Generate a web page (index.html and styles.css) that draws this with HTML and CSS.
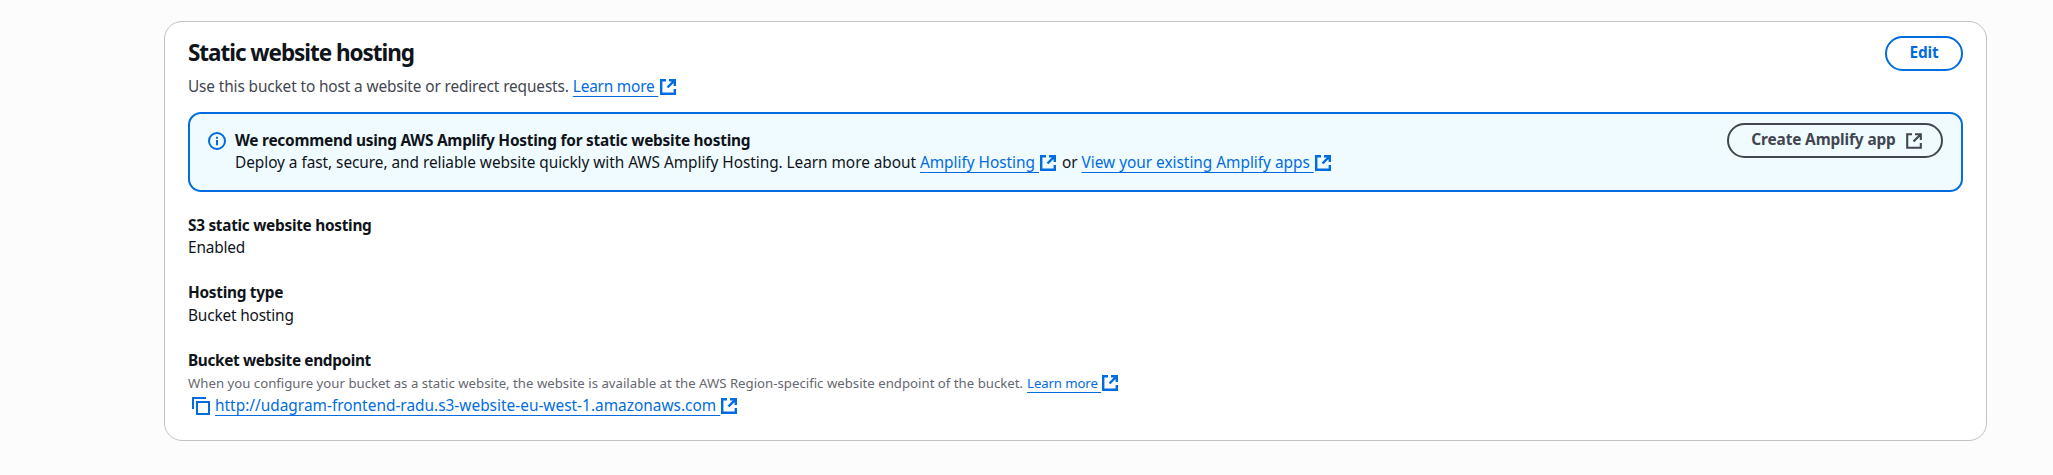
FILE: index.html
```html
<!DOCTYPE html>
<html lang="en">
<head>
<meta charset="utf-8">
<title>Static website hosting</title>
<link rel="stylesheet" href="styles.css">
</head>
<body>
<svg class="defs" aria-hidden="true">
  <symbol id="external" viewBox="0 0 16 16"><path d="M6 1.200H1.200v13.600h13.600V10M9 1.200h5.800V7M14.800 1.200L7.500 8.500"/></symbol>
</svg>
<main class="card">
  <header class="head">
    <div>
      <h2 class="title">Static website hosting</h2>
      <p class="line desc"><span>Use this bucket to host a website or redirect requests.</span><a class="link"><span class="u">Learn more </span><svg class="icon"><use href="#external"/></svg></a></p>
    </div>
    <button class="btn">Edit</button>
  </header>
  <section class="alert">
    <svg class="info" viewBox="0 0 18 18"><circle cx="9" cy="9" r="8"/><path d="M9 8v5.200M9 4.800v2"/></svg>
    <div class="alert-body">
      <h3 class="line strong alert-title">We recommend using AWS Amplify Hosting for static website hosting</h3>
      <p class="line alert-text"><span>Deploy a fast, secure, and reliable website quickly with AWS Amplify Hosting. Learn more about</span><a class="link"><span class="u">Amplify Hosting </span><svg class="icon"><use href="#external"/></svg></a><span class="or">or</span><a class="link"><span class="u">View your existing Amplify apps </span><svg class="icon"><use href="#external"/></svg></a></p>
    </div>
    <button class="btn dark"><span>Create Amplify app</span><svg class="icon"><use href="#external"/></svg></button>
  </section>
  <dl class="fields">
    <div><dt class="line strong">S3 static website hosting</dt><dd class="line">Enabled</dd></div>
    <div><dt class="line strong">Hosting type</dt><dd class="line hosting">Bucket hosting</dd></div>
    <div>
      <dt class="line strong endpoint">Bucket website endpoint</dt>
      <dd class="line small"><span>When you configure your bucket as a static website, the website is available at the AWS Region-specific website endpoint of the bucket.</span><a class="link"><span class="u">Learn more </span><svg class="icon"><use href="#external"/></svg></a></dd>
      <dd class="line url"><svg class="copy" viewBox="0 0 18 18"><path d="M1 12V1h13M5 5h12v12H5z"/></svg><a class="link"><span class="u">http://udagram-frontend-radu.s3-website-eu-west-1.amazonaws.com </span><svg class="icon"><use href="#external"/></svg></a></dd>
    </div>
  </dl>
</main>
</body>
</html>
```

FILE: styles.css
```css
* { box-sizing: border-box; margin: 0; padding: 0; }
body { background: #fcfcfd; color: #0f141a; font: 15.4px/22px "Noto Sans", "Open Sans", sans-serif; padding: 21px 66px 34px 164px; }
.defs { position: absolute; width: 0; height: 0; }
.card { background: #fff; border: 1px solid #c1c2c6; border-radius: 18px; height: 420px; padding: 14px 23px 0; }
.head { display: flex; justify-content: space-between; align-items: flex-start; height: 76px; }
.title { font-size: 22.5px; line-height: 26px; height: 40px; padding-top: 4px; font-weight: 700; letter-spacing: -1.04px; }
.line { display: flex; align-items: center; height: 22px; white-space: pre; font-weight: 400; letter-spacing: -.17px; }
.line.strong { font-weight: 700; font-size: 15.4px; letter-spacing: -.29px; }
.line.alert-title { letter-spacing: -.24px; }
.desc { color: #424650; letter-spacing: -.13px; }
.desc .link { margin-left: 4px; letter-spacing: -.2px; }
.link { display: flex; align-items: center; color: #006ce0; }
.u { text-decoration: underline 1px; text-underline-offset: 4px; text-decoration-skip-ink: none; }
.icon { width: 16px; height: 16px; margin-left: 2px; fill: none; stroke: currentColor; stroke-width: 2.4; }
.btn { display: flex; align-items: center; justify-content: center; width: 78px; height: 35px; border: 2px solid #006ce0; border-radius: 18px; background: #fff; color: #006ce0; font: 700 15.4px/22px "Noto Sans", sans-serif; letter-spacing: -.2px; padding-bottom: 1px; }
.btn.dark { width: 216px; color: #424650; border-color: #424650; background: transparent; margin: -6px 0 0 auto; padding-left: 3px; white-space: nowrap; letter-spacing: -.13px; }
.dark .icon { margin: 2px 0 0 10px; stroke-width: 2.1; }
.alert { display: flex; align-items: flex-start; height: 80px; padding: 15px 18px 0; border: 2px solid #006ce0; border-radius: 13px; background: #f0fbff; }
.alert-body { padding-top: 1px; }
.info { width: 18px; height: 18px; margin: 3px 9px 0 0; fill: none; stroke: #006ce0; stroke-width: 2; }
.line.alert-text { letter-spacing: -.05px; }
.alert-text .link { margin-left: 4px; letter-spacing: -.02px; }
.alert-text .icon { margin-left: 1px; }
.or { margin-left: 6px; }
.fields { display: grid; gap: 23px; padding-top: 23px; }
.line.hosting { height: 24px; }
.line.endpoint { height: 22px; margin-top: -1px; letter-spacing: -.37px; }
.small { font-size: 13.2px; color: #656871; letter-spacing: .01px; }
.small .link { margin-left: 4px; letter-spacing: -.1px; }
.small .icon, .url .icon { margin-left: 1px; }
.url { letter-spacing: .01px; height: 24px; }
.copy { width: 18px; height: 18px; margin: 0 5px 0 4px; fill: none; stroke: #006ce0; stroke-width: 2; }
```
